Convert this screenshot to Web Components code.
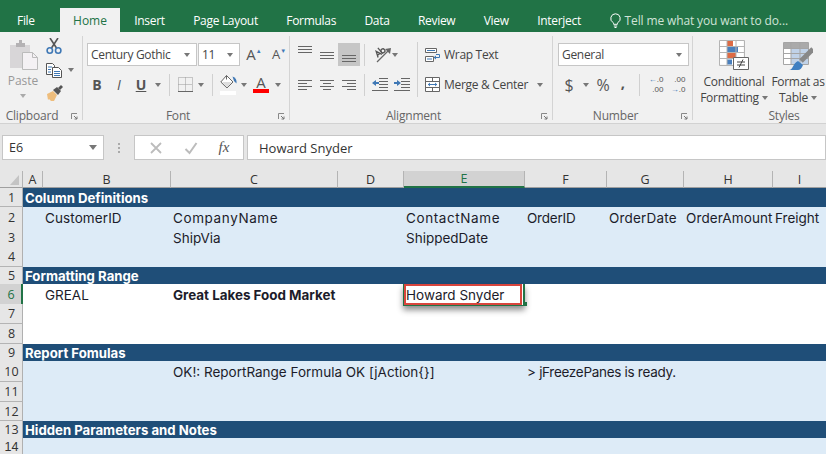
<!DOCTYPE html>
<html>
<head>
<meta charset="utf-8">
<title>Excel</title>
<style>
  html, body { margin: 0; height: 454px; overflow: hidden; background: #e6e6e6; }
  body { font-family: "Open Sans", "Liberation Sans", sans-serif; color: #444; }
  excel-app { display: block; }
</style>
</head>
<body>
<excel-app></excel-app>

<script>
// icons drawn by hand, keyed by name
const lines = (rows, col) => rows.map(r => `<path d="M${r[0]} ${r[2]}.5H${r[1]}" stroke="${col || '#666'}"/>`).join('');
const ICONS = {
  paste: [30, 30, `<path d="M2 5h20v23H2z" fill="#d8d6d8" rx="2"/><path d="M8 3h3V0h3v3h3v4H8z" fill="#b4b2b4"/>
    <path d="M14.500 12.500h10l5 5v12h-15z" fill="#f4f1f4" stroke="#bbb"/><path d="M24.500 12.500v5h5" fill="none" stroke="#bbb"/>`],
  cut: [16, 16, `<path d="M4 0l6.500 10M12 0L5.500 10" stroke="#555" stroke-width="1.600" fill="none"/>
    <circle cx="3.800" cy="12.500" r="2.700" fill="none" stroke="#3f78b5" stroke-width="1.600"/><circle cx="12.200" cy="12.500" r="2.700" fill="none" stroke="#3f78b5" stroke-width="1.600"/>`],
  copy: [16, 15, `<path d="M.5.500h6l2 2v9h-8z" fill="#fff" stroke="#555"/><path d="M6.500 4.500h6l3 3v7h-9z" fill="#fff" stroke="#555"/>
    <path d="M2 4h4M2 6.500h3M2 9h3" stroke="#3f78b5"/><path d="M8 8.500h6M8 10.500h6M8 12.500h6" stroke="#3f78b5"/>`],
  painter: [17, 16, `<path d="M1 9l6-3 4 4-3 6H5L3 14l-1 1z" fill="#eebd7c"/><path d="M7 5l4-3 4 4-3 4z" fill="#555"/><path d="M12 3l3-3 2 2-3 3z" fill="#555"/>`],
  borders: [15, 15, `<path d="M.5.500h14v14H.5zM.5 7.500h14M7.500.500v14" fill="none" stroke="#999" stroke-dasharray="1 1"/><path d="M0 14.500h15" stroke="#666"/>`],
  fill: [17, 21, `<path d="M6.500 1.500l6.500 6.500-6 6L.8 8z" fill="#fff" stroke="#666"/><path d="M2 8h10l-5 5.500z" fill="#ddd"/><path d="M6.500 1.500v4" stroke="#666"/>
    <path d="M12.500 2.500c3 1 4.500 3.500 4 7L14 7z" fill="#3f78b5"/><path d="M0 17h16v4H0z" fill="#fff"/>`],
  alTop: [14, 7, lines([[0,14,0],[0,14,3],[0,14,6]])],
  alMid: [14, 7, lines([[0,14,0],[0,14,3],[0,14,6]])],
  alBot: [14, 7, lines([[0,14,0],[0,14,3],[0,14,6]])],
  alL: [14, 10, lines([[0,14,0],[0,9,3],[0,14,6],[0,9,9]])],
  alC: [14, 10, lines([[0,14,0],[3,11,3],[0,14,6],[3,11,9]])],
  alR: [14, 10, lines([[0,14,0],[5,14,3],[0,14,6],[5,14,9]])],
  orient: [18, 17, `<path d="M3 16L15 4" stroke="#666" stroke-width="1.300"/><path d="M11 3l6-1-1 6z" fill="#666"/>
    <g fill="none" stroke="#555" stroke-width="1.300" transform="rotate(-40 6 6)"><path d="M1 9l2.500-6L6 9M2 7h3"/><circle cx="9" cy="7" r="2"/><path d="M7 1.500V9"/></g>`],
  indL: [16, 13, lines([[7,16,0],[7,16,3],[7,16,6],[7,16,9],[0,16,12]]) + `<path d="M0 5l4-3v2h3v2H4v2z" fill="#3f78b5"/>`],
  indR: [16, 13, lines([[7,16,0],[7,16,3],[7,16,6],[7,16,9],[0,16,12]]) + `<path d="M7 5L3 2v2H0v2h3v2z" fill="#3f78b5"/>`],
  wrap: [16, 14, `<path d="M.5 .5h11v4H.5zM.5 8.500h8v5h-8z" fill="#fff" stroke="#666"/><path d="M2 2.500h8M2 11h5" stroke="#3f78b5"/>
    <path d="M11 6.500h3.500v3H11" fill="none" stroke="#3f78b5"/><path d="M11 7.500l-2.500 2 2.500 2z" fill="#3f78b5"/>`],
  merge: [15, 15, `<path d="M.5.500h14v14H.5zM.5 4.500h14M.5 10.500h14M7.500.500v4M7.500 10.500v4" fill="#fff" stroke="#666"/>
    <path d="M3 7.500h9" stroke="#3f78b5"/><path d="M3 7.500l2-2v4zM12 7.500l-2-2v4z" fill="#3f78b5"/>`],
  cond: [30, 30, `<path d="M.5.500h24v24H.5z" fill="#fff"/>
    <path d="M8 0h6v6H8z" fill="#dd6b45"/><path d="M8 6.500h11v6H8z" fill="#4a80bd"/><path d="M8 13h9v6H8z" fill="#dd6b45"/><path d="M8 19.500h5v5H8z" fill="#4a80bd"/>
    <path d="M.5.500h25v25H.5zM.5 6.500h25M.5 12.500h25M.5 18.500h25M8 .500v25M17 .500v25" fill="none" stroke="#b4b4b4"/>
    <path d="M14.500 17.500h15v12h-15z" fill="#fff" stroke="#666"/>
    <path d="M18 22h8M18 25h8M20 27.500l4-8" stroke="#444" fill="none"/>`],
  table: [30, 30, `<path d="M.5 2.500h25v22H.5z" fill="#fff"/><path d="M1 3h24v5H1z" fill="#aaa"/><path d="M8 8h17v16H8z" fill="#c0d2e8"/>
    <path d="M.5 2.500h25v22H.5zM.5 8.500h25M.5 13.500h25M.5 18.500h25M8 2.500v22M17 2.500v22" fill="none" stroke="#a5a5a5"/>
    <path d="M30 9L18 21" stroke="#888" stroke-width="5"/><path d="M6 30c4 0 4-7 9-9l5 4c-1 3-3 5-5 5z" fill="#3f7fc1"/>`],
  launch: [7, 7, `<path d="M.5 6V.5H6" fill="none" stroke="#888"/><path d="M3 3l3 3M6 3.500V6H3.500" fill="none" stroke="#777"/>`],
  bulb: [11, 15, `<path d="M5.500.8a4.700 4.700 0 0 0-2.500 8.700c.5.400.6 1 .6 1.800h3.800c0-.8.100-1.400.6-1.800A4.700 4.700 0 0 0 5.500.8z" fill="none" stroke="#fff"/><path d="M3.800 13h3.400M4.500 14.500h2" stroke="#fff"/>`],
  x: [14, 14, `<path d="M2 2l10 10M12 2L2 12" stroke="#bcbcbc" stroke-width="1.800"/>`],
  check: [14, 14, `<path d="M1.500 8l4 4 7-10" fill="none" stroke="#bcbcbc" stroke-width="2"/>`]
};

class RIcon extends HTMLElement {
  connectedCallback() {
    const [w, h, body] = ICONS[this.getAttribute('name')];
    this.attachShadow({ mode: 'open' }).innerHTML = `
      <style>:host { display: inline-flex; line-height: 0; } svg { display: block; }</style>
      <svg width="${w}" height="${h}" viewBox="0 0 ${w} ${h}">${body}</svg>`;
  }
}
customElements.define('r-icon', RIcon);

// small dropdown arrow
class RCaret extends HTMLElement {
  connectedCallback() {
    this.attachShadow({ mode: 'open' }).innerHTML = `
      <style>
        :host { display: inline-block; width: 0; height: 0; flex: none;
          border-left: 3.500px solid transparent; border-right: 3.500px solid transparent; border-top: 4px solid #777; }
      </style>`;
  }
}
customElements.define('r-caret', RCaret);

class RBtn extends HTMLElement {
  connectedCallback() {
    const w = this.getAttribute('w') || 22;
    this.attachShadow({ mode: 'open' }).innerHTML = `
      <style>
        :host { display: flex; flex: none; align-items: center; justify-content: center; width: ${w}px; height: 23px; }
        :host([on]) { background: #c6c6c6; }
      </style><slot></slot>`;
  }
}
customElements.define('r-btn', RBtn);

class RSep extends HTMLElement {
  connectedCallback() {
    this.attachShadow({ mode: 'open' }).innerHTML = `
      <style>:host { display: block; flex: none; width: 1px; height: 22px; background: #d0d0d0; }</style>`;
  }
}
customElements.define('r-sep', RSep);

class RBox extends HTMLElement {
  connectedCallback() {
    const w = this.getAttribute('w');
    this.attachShadow({ mode: 'open' }).innerHTML = `
      <style>
        :host { display: flex; flex: none; box-sizing: border-box; align-items: center; width: ${w}px; height: 23px;
          padding: 0 6px 0 3px; background: #fff; border: 1px solid #c6c6c6; font-size: 12px; color: #444; letter-spacing: -.3px; }
        span { flex: 1; }
      </style><span><slot></slot></span><r-caret></r-caret>`;
  }
}
customElements.define('r-box', RBox);

const groupTemplate = document.createElement('template');
groupTemplate.innerHTML = `
  <style>
    :host { display: flex; flex-direction: column; flex: none; box-sizing: border-box; height: 84px;
      border-right: 1px solid #d4d4d4; position: relative; }
    .body { flex: 1; min-height: 0; }
    .label { height: 10px; line-height: 12px; text-align: center; font-size: 12px; color: #666; white-space: nowrap; padding-right: var(--label-shift, 0); letter-spacing: -.2px; }
    r-icon { position: absolute; right: 4px; bottom: 0; }
  </style>
  <div class="body"><slot></slot></div>
  <div class="label"></div>
  <r-icon name="launch"></r-icon>`;

class RGroup extends HTMLElement {
  connectedCallback() {
    const root = this.attachShadow({ mode: 'open' });
    root.appendChild(groupTemplate.content.cloneNode(true));
    root.querySelector('.label').textContent = this.getAttribute('label');
    if (this.hasAttribute('plain')) root.querySelector('r-icon').remove();
    this.style.width = this.getAttribute('w') + 'px';
  }
}
customElements.define('r-group', RGroup);

const ribbonTemplate = document.createElement('template');
ribbonTemplate.innerHTML = `
  <style>
    :host { display: block; }
    .tabs { display: flex; height: 32px; background: #217346; color: #fff; font-size: 12px; letter-spacing: -.3px; align-items: flex-end; padding-left: 2.500px; }
    .tab { height: 24px; line-height: 25px; padding: 0 14.200px; white-space: nowrap; }
    .tab.file { box-sizing: border-box; width: 57.500px; padding: 0 0 0 14.500px; }
    .tab.on { box-sizing: border-box; width: 60px; padding: 0; text-align: center; letter-spacing: 0; background: #f1f1f1; color: #217346; }
    .tell { display: flex; align-items: center; height: 24px; gap: 3.500px; color: #cfe3d7; margin-left: 15px; white-space: nowrap; letter-spacing: -.13px; }
    .bar { display: flex; height: 92px; box-sizing: border-box; padding-top: 4px; background: #f1f1f1; border-bottom: 1px solid #d2d2d2; overflow: hidden; }
    .row { display: flex; align-items: center; height: 23px; }
    .rows { padding-top: 7px; display: flex; flex-direction: column; gap: 7px; }
    .t { font-size: 14px; font-weight: 700; color: #555; line-height: 1; }
    .clip { display: flex; padding-left: 8px; }
    .paste { width: 30px; display: flex; flex-direction: column; align-items: center; padding-top: 4px; color: #999; font-size: 12px; line-height: 16px; }
    .paste r-caret { margin-top: 5px; border-top-color: #aaa; }
    .mini { display: flex; flex-direction: column; gap: 7px; margin-left: 8px; padding-top: 2px; }
    .mini div { display: flex; align-items: center; height: 16px; }
    .mini r-caret { margin-left: 6px; }
    .big { display: flex; flex-direction: column; align-items: center; padding-top: 4px; font-size: 12px; line-height: 16px; color: #444; flex: none; white-space: nowrap; letter-spacing: -.3px; }
    .big r-icon { margin-bottom: 4px; }
    .big r-caret { vertical-align: 2px; margin-left: 3px; }
    .label { font-size: 12px; color: #444; white-space: nowrap; letter-spacing: -.3px; }
    .num { display: flex; flex-direction: column; align-items: flex-end; font: 8px/9.200px "Liberation Sans", sans-serif; color: #555; }
    .num em { font-style: normal; color: #3f78b5; font-weight: 700; }
  </style>
  <div class="tabs">
    <div class="tab file">File</div>
    <div class="tab on">Home</div>
    <div class="tab">Insert</div>
    <div class="tab">Page Layout</div>
    <div class="tab">Formulas</div>
    <div class="tab">Data</div>
    <div class="tab">Review</div>
    <div class="tab">View</div>
    <div class="tab">Interject</div>
    <div class="tell"><r-icon name="bulb"></r-icon>Tell me what you want to do...</div>
  </div>
  <div class="bar">
    <r-group label="Clipboard" w="83" style="--label-shift:18px">
      <div class="clip">
        <div class="paste"><r-icon name="paste"></r-icon><span style="margin-top:3px">Paste</span><r-caret></r-caret></div>
        <div class="mini">
          <div><r-icon name="cut"></r-icon></div>
          <div style="margin-top:1px"><r-icon name="copy"></r-icon><r-caret></r-caret></div>
          <div><r-icon name="painter"></r-icon></div>
        </div>
      </div>
    </r-group>
    <r-group label="Font" w="207" style="--label-shift:16px">
      <div class="rows" style="padding-left:4px">
        <div class="row">
          <r-box w="110">Century Gothic</r-box>
          <r-box w="42" style="margin-left:1px">11</r-box>
          <r-btn w="22" style="margin-left:3px"><span class="t" style="font-weight:400;font-size:15px">A</span><span style="font-size:6px;color:#3f78b5;align-self:flex-start;margin-top:4px">▲</span></r-btn>
          <r-btn w="22" style="margin-left:3px"><span class="t" style="font-weight:400;font-size:13px">A</span><span style="font-size:6px;color:#3f78b5;align-self:flex-start;margin-top:4px">▼</span></r-btn>
        </div>
        <div class="row" style="margin-left:-1px">
          <r-btn><span class="t">B</span></r-btn>
          <r-btn><span class="t" style="font-style:italic;font-weight:400">I</span></r-btn>
          <r-btn><span class="t" style="text-decoration:underline">U</span></r-btn>
          <r-btn w="12"><r-caret></r-caret></r-btn>
          <r-sep style="margin:0 4px 0 5px"></r-sep>
          <r-btn><r-icon name="borders"></r-icon></r-btn>
          <r-btn w="10"><r-caret></r-caret></r-btn>
          <r-sep style="margin:0 6px"></r-sep>
          <r-btn w="18"><r-icon name="fill"></r-icon></r-btn>
          <r-btn w="14"><r-caret></r-caret></r-btn>
          <r-btn w="20" style="position:relative"><span class="t" style="font-size:15px;font-weight:400;margin-top:-5px">A</span><span style="position:absolute;left:2px;right:2px;bottom:3px;height:4px;background:#f00"></span></r-btn>
          <r-btn w="14"><r-caret></r-caret></r-btn>
        </div>
      </div>
    </r-group>
    <r-group label="Alignment" w="263" style="--label-shift:15px">
      <div class="rows" style="padding-left:4px">
        <div class="row">
          <r-btn style="align-items:flex-start;padding-top:3px;height:20px"><r-icon name="alTop"></r-icon></r-btn>
          <r-btn style="padding-top:1px;height:22px"><r-icon name="alMid"></r-icon></r-btn>
          <r-btn on style="align-items:flex-end"><r-icon name="alBot" style="margin-bottom:4px"></r-icon></r-btn>
          <r-sep style="margin:0 5px 0 4px"></r-sep>
          <r-btn w="19" style="margin-left:3px"><r-icon name="orient"></r-icon></r-btn>
          <r-btn w="6"><r-caret></r-caret></r-btn>
          <r-sep style="margin:-1px 0 0 19px;height:55px;align-self:flex-start"></r-sep>
          <r-btn w="20" style="margin-left:5px"><r-icon name="wrap"></r-icon></r-btn>
          <span class="label" style="margin-left:1px">Wrap Text</span>
        </div>
        <div class="row">
          <r-btn><r-icon name="alL"></r-icon></r-btn>
          <r-btn><r-icon name="alC"></r-icon></r-btn>
          <r-btn><r-icon name="alR"></r-icon></r-btn>
          <r-sep style="margin:0 4px"></r-sep>
          <r-btn><r-icon name="indL"></r-icon></r-btn>
          <r-btn><r-icon name="indR"></r-icon></r-btn>
          <r-btn w="20" style="margin-left:9.500px"><r-icon name="merge"></r-icon></r-btn>
          <span class="label" style="margin-left:1.500px">Merge &amp; Center</span>
          <r-caret style="margin-left:9px"></r-caret>
        </div>
      </div>
    </r-group>
    <r-group label="Number" w="140" style="--label-shift:14px">
      <div class="rows" style="padding-left:5px">
        <div class="row"><r-box w="131">General</r-box></div>
        <div class="row">
          <r-btn w="22"><span class="t" style="font-size:16px;font-weight:400">$</span></r-btn>
          <r-btn w="12"><r-caret></r-caret></r-btn>
          <r-btn w="22"><span class="t" style="font-size:16px;font-weight:400">%</span></r-btn>
          <r-btn w="18"><span class="t" style="font-size:15px;margin-top:-4px">,</span></r-btn>
          <r-sep style="margin:0 6px 0 7px"></r-sep>
          <r-btn w="20"><span class="num"><span><em>←</em>.0</span><span>.00</span></span></r-btn>
          <r-btn w="20" style="margin-left:2px"><span class="num"><span>.00</span><span><em>→</em>.0</span></span></r-btn>
        </div>
      </div>
    </r-group>
    <r-group label="Styles" plain w="182" style="border-right:0">
      <div style="display:flex;padding-left:6px;gap:2px">
        <div class="big" style="width:70px"><r-icon name="cond"></r-icon><span>Conditional</span><span>Formatting<r-caret></r-caret></span></div>
        <div class="big" style="width:54px"><r-icon name="table"></r-icon><span>Format as</span><span>Table<r-caret></r-caret></span></div>
      </div>
    </r-group>
  </div>`;

class ExcelRibbon extends HTMLElement {
  connectedCallback() {
    this.attachShadow({ mode: 'open' }).appendChild(ribbonTemplate.content.cloneNode(true));
  }
}
customElements.define('excel-ribbon', ExcelRibbon);

const formulaTemplate = document.createElement('template');
formulaTemplate.innerHTML = `
  <style>
    :host { display: flex; align-items: stretch; box-sizing: border-box; height: 47px; padding: 11px 0 11px 2px; background: #e6e6e6; }
    .box { background: #fff; border: 1px solid #c6c6c6; box-sizing: border-box; display: flex; align-items: center; height: 25px; }
    .name { width: 102px; padding: 0 6px; font-size: 12.500px; color: #333; }
    .name span { flex: 1; }
    .name r-caret { border-left-width: 4px; border-right-width: 4px; border-top-width: 5px; }
    .dots { width: 30px; display: flex; flex-direction: column; gap: 2px; align-items: center; justify-content: center; padding-right: 1px; box-sizing: border-box; }
    .dots i { width: 2px; height: 2px; background: #aaa; }
    .btns { width: 110px; justify-content: space-around; padding: 0 3px; }
    .fx { font: italic 400 15px "Liberation Serif", serif; color: #555; }
    .input { flex: 1; margin-left: 3px; padding-left: 11px; font-size: 13px; color: #333; white-space: nowrap; }
  </style>
  <div class="box name"><span>E6</span><r-caret></r-caret></div>
  <div class="dots"><i></i><i></i><i></i></div>
  <div class="box btns"><r-icon name="x"></r-icon><r-icon name="check"></r-icon><span class="fx">fx</span></div>
  <div class="box input">Howard Snyder</div>`;

class FormulaBar extends HTMLElement {
  connectedCallback() {
    this.attachShadow({ mode: 'open' }).appendChild(formulaTemplate.content.cloneNode(true));
  }
}
customElements.define('formula-bar', FormulaBar);

const COLS = ['A', 'B', 'C', 'D', 'E', 'F', 'G', 'H', 'I'];
const COL_TRACKS = '23px 20px 128px 167px 66px 121px 82px 77px 89px 1fr';
const sp = (txt, ls) => `<span style="letter-spacing:${ls}px">${txt}</span>`;
// height, band, cells
const ROWS = [
  [19, 'head', { A: '<span style="position:relative;top:1px">Column Definitions</span>' }],
  [20, 'pale', { B: sp('CustomerID', .1), C: sp('CompanyName', .6), E: sp('ContactName', .6), F: sp('OrderID', -.2), G: sp('OrderDate', .2), H: sp('OrderAmount', .1), I: 'Freight' }],
  [20, 'pale', { C: 'ShipVia', E: 'ShippedDate' }],
  [20, 'pale', {}],
  [17, 'head', { A: 'Formatting Range' }],
  [20, '', { B: 'GREAL', C: '<b>Great Lakes Food Market</b>', E: 'Howard Snyder' }],
  [20, '', {}],
  [20, '', {}],
  [17, 'head', { A: 'Report Fomulas' }],
  [21, 'pale', { C: 'OK!: ReportRange Formula OK [jAction{}]', F: sp('&gt; jFreezePanes is ready.', -.3) }],
  [20, 'pale', {}],
  [19, 'pale', {}],
  [17, 'head', { A: 'Hidden Parameters and Notes' }],
  [16, 'pale last', {}]
];

const sheetStyle = `
  <style>
    :host { display: block; --tracks: ${COL_TRACKS}; font-family: Inter, "Liberation Sans", sans-serif; font-size: 13.500px; color: #1c1c2a; }
    .row { display: grid; grid-template-columns: var(--tracks); background: #fff; }
    .row.cols { height: 17px; font: 12.500px "Open Sans", sans-serif; color: #333; background: #e6e6e6; }
    .cols div { display: flex; align-items: center; justify-content: center; border-right: 1px solid #b4b4b4; border-bottom: 1px solid #9f9f9f; box-sizing: border-box; height: 17px; }
    .cols .last { border-right: 0; }
    .cols .sel { background: #d2d2d2; color: #217346; border-bottom: 2px solid #217346; }
    .corner svg { display: block; }
    .rh { display: flex; align-items: center; justify-content: center; box-sizing: border-box; background: #e6e6e6; border-right: 1px solid #b0b0b0; border-bottom: 1px solid #b4b4b4;
      font: 12.500px "Open Sans", sans-serif; color: #333; padding-left: 1px; }
    .rh.sel { background: #d2d2d2; color: #217346; border-right: 2px solid #217346; }
    .last .rh { font-family: "Liberation Sans", sans-serif; border-bottom: 0; padding-top: 1px; }
    .c { padding: 1px 0 0 2px; white-space: nowrap; line-height: 20px; min-width: 0; position: relative; }
    .row.pale { background: #ddebf7; }
    .row.head { background: #1f4e78; color: #fff; font-weight: 700; font-size: 13.200px; }
    .head .c { line-height: 18px; padding-top: 0; }
    .head .rh { font-weight: 400; }
    b { font-weight: 700; font-size: 13.400px; }
    .selbox { position: absolute; left: -1px; top: 0; width: 122px; height: 22px; box-sizing: border-box; border-left: 1px solid #217346; border-right: 2px solid #217346; border-bottom: 1px solid #217346; box-shadow: 0 4px 6px rgba(0,0,0,.45); background: #fff; }
    .selbox i { display: block; box-sizing: border-box; width: 118px; height: 21px; border: 2px solid #d9453d; }
    .selbox u { position: absolute; right: -4px; bottom: -1px; width: 4px; height: 4px; background: #217346; }
    .seltext { position: absolute; left: 2px; top: 1px; }
    .wrap { height: 283px; overflow: hidden; }
  </style>`;

class ExcelSheet extends HTMLElement {
  connectedCallback() {
    const head = COLS.map(c => `<div class="${c === 'E' ? 'sel' : ''}${c === 'I' ? ' last' : ''}">${c}</div>`).join('');
    const body = ROWS.map(([h, band, cells], i) => {
      const num = i + 1;
      const cols = COLS.map(c => {
        let inner = cells[c] || '';
        if (num === 6 && c === 'E') {
          inner = `<span class="selbox"><i></i><u></u></span><span class="seltext">${inner}</span>`;
        }
        return `<div class="c">${inner}</div>`;
      }).join('');
      return `<div class="row ${band}" style="height:${h}px">
        <div class="rh${num === 6 ? ' sel' : ''}" style="${band === 'head' ? 'color:#333' : ''}">${num}</div>${cols}</div>`;
    }).join('');
    this.attachShadow({ mode: 'open' }).innerHTML = `${sheetStyle}
      <div class="wrap">
        <div class="row cols">
          <div class="corner" style="align-items:flex-end;justify-content:flex-start"><svg width="22" height="15" viewBox="0 0 22 15"><path d="M19 3v10H10z" fill="#c4c4c4"/></svg></div>${head}
        </div>
        ${body}
      </div>`;
  }
}
customElements.define('excel-sheet', ExcelSheet);

class ExcelApp extends HTMLElement {
  connectedCallback() {
    this.attachShadow({ mode: 'open' }).innerHTML = `
      <style>:host { display: block; }</style>
      <excel-ribbon></excel-ribbon>
      <formula-bar></formula-bar>
      <excel-sheet></excel-sheet>`;
  }
}
customElements.define('excel-app', ExcelApp);
</script>
</body>
</html>
